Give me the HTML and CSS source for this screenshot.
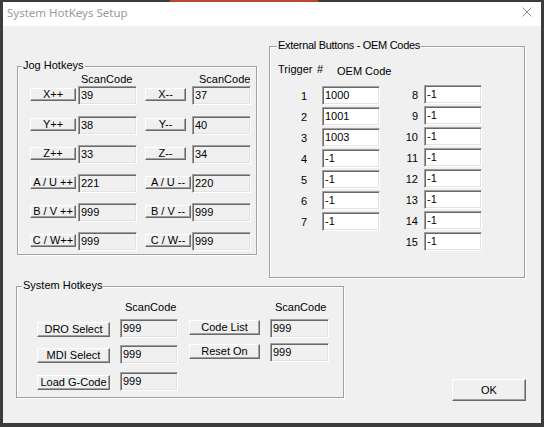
FILE: index.html
```html
<!DOCTYPE html>
<html>
<head>
<meta charset="utf-8">
<title>System HotKeys Setup</title>
<link rel="stylesheet" href="styles.css">
</head>
<body>
<div class="window">
  <div class="titlebar">
    <span class="title">System HotKeys Setup</span>
    <svg class="close" width="10" height="10" viewBox="0 0 10 10"><path d="M0.5 0.5L9.5 9.5M9.5 0.5L0.5 9.5" stroke="#8c8c8c" stroke-width="1" fill="none"/></svg>
  </div>
  <div class="client">
    <div class="row1">
      <div class="group jog">
        <span class="legend">Jog Hotkeys</span>
        <div class="jrow jhead"><span class="h1">ScanCode</span><span class="h2">ScanCode</span></div>
        <div class="jrow"><button class="btn jb">X++</button><div class="edit ro">39</div><button class="btn jb narrow">X--</button><div class="edit ro">37</div></div>
        <div class="jrow g11"><button class="btn jb">Y++</button><div class="edit ro">38</div><button class="btn jb narrow">Y--</button><div class="edit ro">40</div></div>
        <div class="jrow g10"><button class="btn jb">Z++</button><div class="edit ro">33</div><button class="btn jb narrow">Z--</button><div class="edit ro">34</div></div>
        <div class="jrow g10"><button class="btn jb">A / U ++</button><div class="edit ro">221</div><button class="btn jb">A / U --</button><div class="edit ro">220</div></div>
        <div class="jrow g10"><button class="btn jb">B / V ++</button><div class="edit ro">999</div><button class="btn jb">B / V --</button><div class="edit ro">999</div></div>
        <div class="jrow g10"><button class="btn jb">C / W++</button><div class="edit ro">999</div><button class="btn jb">C / W--</button><div class="edit ro">999</div></div>
      </div>
      <div class="group ext">
        <span class="legend lg-ext">External Buttons - OEM Codes</span>
        <div class="ehead"><span class="trig">Trigger</span><span class="hash">#</span><span class="oem">OEM Code</span></div>
        <div class="ecols">
          <div class="ecol left">
            <div class="erow"><span class="num">1</span><div class="edit wb">1000</div></div>
            <div class="erow"><span class="num">2</span><div class="edit wb">1001</div></div>
            <div class="erow"><span class="num">3</span><div class="edit wb">1003</div></div>
            <div class="erow"><span class="num">4</span><div class="edit wb">-1</div></div>
            <div class="erow"><span class="num">5</span><div class="edit wb">-1</div></div>
            <div class="erow"><span class="num">6</span><div class="edit wb">-1</div></div>
            <div class="erow"><span class="num">7</span><div class="edit wb">-1</div></div>
          </div>
          <div class="ecol right">
            <div class="erow"><span class="num">8</span><div class="edit wb">-1</div></div>
            <div class="erow"><span class="num">9</span><div class="edit wb">-1</div></div>
            <div class="erow"><span class="num">10</span><div class="edit wb">-1</div></div>
            <div class="erow"><span class="num">11</span><div class="edit wb">-1</div></div>
            <div class="erow"><span class="num">12</span><div class="edit wb">-1</div></div>
            <div class="erow"><span class="num">13</span><div class="edit wb">-1</div></div>
            <div class="erow"><span class="num">14</span><div class="edit wb">-1</div></div>
            <div class="erow"><span class="num">15</span><div class="edit wb">-1</div></div>
          </div>
        </div>
      </div>
    </div>
    <div class="row2">
      <div class="group sys">
        <span class="legend lg-sys">System Hotkeys</span>
        <div class="scol sleft">
          <div class="shead">ScanCode</div>
          <div class="srow"><button class="btn sb">DRO Select</button><div class="edit ro">999</div></div>
          <div class="srow g7"><button class="btn sb">MDI Select</button><div class="edit ro">999</div></div>
          <div class="srow g8"><button class="btn sb">Load G-Code</button><div class="edit ro">999</div></div>
        </div>
        <div class="scol sright">
          <div class="shead">ScanCode</div>
          <div class="srow"><button class="btn sb">Code List</button><div class="edit ro">999</div></div>
          <div class="srow g5"><button class="btn sb">Reset On</button><div class="edit ro">999</div></div>
        </div>
      </div>
      <button class="btn ok">OK</button>
    </div>
  </div>
</div>
</body>
</html>
```
FILE: styles.css
```css
html, body {
  margin: 0;
  padding: 0;
}
body {
  width: 544px;
  height: 427px;
  overflow: hidden;
  background-color: #3c3c3c;
  background-image: linear-gradient(90deg, transparent 170px, #b8472c 170px, #b8472c 318px, transparent 318px);
  background-size: 100% 2px;
  background-repeat: no-repeat;
  font-family: "Liberation Sans", Arial, sans-serif;
  font-size: 11px;
  color: #000;
}
.window {
  margin: 2px 0 0 3px;
  width: 538px;
  height: 421px;
  display: flex;
  flex-direction: column;
  background: #f0f0f0;
}
.titlebar {
  height: 24px;
  flex: none;
  background: #fff;
  display: flex;
  justify-content: space-between;
  align-items: flex-start;
  padding: 0 9px 0 4px;
  box-sizing: border-box;
}
.title {
  font-family: "Noto Sans", sans-serif;
  font-size: 11.5px;
  line-height: 22px;
  color: #9a9a9a;
}
.close {
  margin-top: 5px;
  display: block;
}
.client {
  flex: 1;
}
.row1, .row2 {
  display: flex;
  align-items: flex-start;
}
.group {
  position: relative;
  box-sizing: border-box;
  border: 1px solid #a0a0a0;
  box-shadow: inset 1px 1px 0 #fff, 1px 1px 0 #fff;
}
.legend {
  position: absolute;
  top: -8px;
  left: 4px;
  padding: 0 1px;
  background: #f0f0f0;
  line-height: 13px;
  white-space: nowrap;
}
.lg-ext {
  left: 7px;
  letter-spacing: -0.3px;
}
.lg-sys {
  left: 5px;
}
.btn {
  font-family: "Liberation Sans", Arial, sans-serif;
  font-size: 11px;
  color: #000;
  background: #f0f0f0;
  box-sizing: border-box;
  border: 1px solid;
  border-color: #fff #696969 #696969 #fff;
  box-shadow: inset -1px -1px 0 #a0a0a0;
  padding: 0;
  margin: 0;
  white-space: nowrap;
  overflow: hidden;
}
.edit {
  box-sizing: border-box;
  height: 19px;
  border: 1px solid;
  border-color: #a0a0a0 #fff #fff #a0a0a0;
  box-shadow: inset 1px 1px 0 #696969, inset -1px -1px 0 #e3e3e3;
  padding-left: 2px;
  line-height: 17px;
  white-space: nowrap;
}
.ro {
  background: #f0f0f0;
  width: 59px;
}
.wb {
  background: #fff;
  width: 58px;
}

/* Jog hotkeys */
.jog {
  margin: 40px 0 0 14px;
  width: 240px;
  height: 189px;
  padding: 6px 0 0 12px;
}
.jrow {
  display: grid;
  grid-template-columns: 48px 67px 47px 59px;
  height: 19px;
  align-items: start;
}
.jrow.jhead {
  height: 13px;
  line-height: 13px;
}
.jhead .h1 { grid-column: 2; padding-left: 3px; }
.jhead .h2 { grid-column: 4; padding-left: 7px; }
.g11 { margin-top: 11px; }
.g10 { margin-top: 10px; }
.jb {
  width: 46px;
  height: 13px;
  margin-top: 2px;
  line-height: 11px;
}
.jb.narrow {
  width: 41px;
}

/* External buttons */
.ext {
  margin: 20px 0 0 12px;
  width: 256px;
  height: 232px;
  padding: 16px 0 0 8px;
}
.ehead {
  display: flex;
  line-height: 13px;
  height: 13px;
}
.trig { width: 39px; }
.hash { width: 20px; }
.oem { margin-top: 2px; }
.ecols {
  display: flex;
  align-items: flex-start;
  margin-top: 9px;
  padding-left: 2px;
}
.ecol {
  display: flex;
  flex-direction: column;
  gap: 2px;
}
.ecol.left {
  margin-top: 1px;
}
.ecol.right {
  margin-left: 10px;
}
.erow {
  display: flex;
  align-items: center;
  height: 19px;
  line-height: 19px;
}
.left .num {
  width: 27px;
  margin-right: 15px;
  text-align: right;
  padding-top: 1px;
}
.right .num {
  width: 28px;
  margin-right: 6px;
  text-align: right;
  padding-top: 1px;
}

/* System hotkeys */
.sys {
  margin: 8px 0 0 13px;
  width: 328px;
  height: 112px;
  padding: 14px 0 0 20px;
  display: flex;
  align-items: flex-start;
  gap: 11px;
}
.shead {
  line-height: 13px;
  height: 13px;
  margin-bottom: 5px;
}
.sleft .shead { padding-left: 88px; }
.sright .shead { padding-left: 86px; }
.srow {
  display: grid;
  height: 19px;
  align-items: start;
}
.sleft .srow { grid-template-columns: 83px 58px; }
.sright .srow { grid-template-columns: 81px 59px; }
.sleft .edit { width: 58px; }
.g7 { margin-top: 7px; }
.g8 { margin-top: 8px; }
.g5 { margin-top: 5px; }
.sb {
  height: 15px;
  line-height: 13px;
}
.sleft .sb {
  width: 73px;
  margin-top: 3px;
}
.sright .sb {
  width: 71px;
  margin-top: 1px;
}
.ok {
  margin: 101px 0 0 108px;
  width: 74px;
  height: 22px;
  line-height: 20px;
  font-size: 11px;
}
```
